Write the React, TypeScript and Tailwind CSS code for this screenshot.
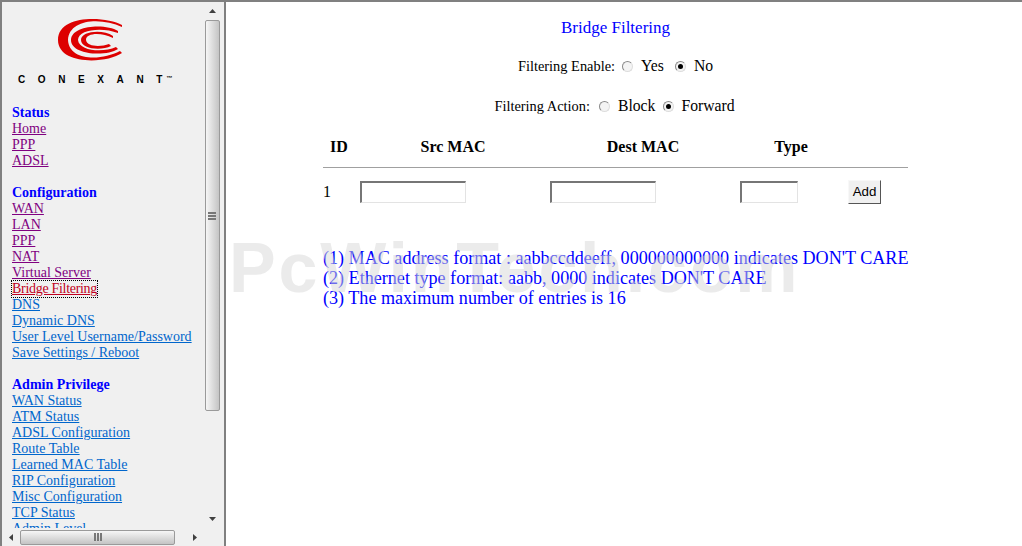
import React from 'react';

type SideLink = { label: string; tone: string };

const visited = 'text-[#800080]';
const unvisited = 'text-[#0066cc]';

const sections: { title: string; links: SideLink[] }[] = [
  {
    title: 'Status',
    links: [
      { label: 'Home', tone: visited },
      { label: 'PPP', tone: visited },
      { label: 'ADSL', tone: visited },
    ],
  },
  {
    title: 'Configuration',
    links: [
      { label: 'WAN', tone: visited },
      { label: 'LAN', tone: visited },
      { label: 'PPP', tone: visited },
      { label: 'NAT', tone: visited },
      { label: 'Virtual Server', tone: visited },
      { label: 'Bridge Filtering', tone: 'tracking-[-0.3px] text-[#c00020] outline-1 outline-dotted outline-black' },
      { label: 'DNS', tone: unvisited },
      { label: 'Dynamic DNS', tone: unvisited },
      { label: 'User Level Username/Password', tone: unvisited },
      { label: 'Save Settings / Reboot', tone: unvisited },
    ],
  },
  {
    title: 'Admin Privilege',
    links: [
      { label: 'WAN Status', tone: unvisited },
      { label: 'ATM Status', tone: unvisited },
      { label: 'ADSL Configuration', tone: unvisited },
      { label: 'Route Table', tone: unvisited },
      { label: 'Learned MAC Table', tone: unvisited },
      { label: 'RIP Configuration', tone: unvisited },
      { label: 'Misc Configuration', tone: unvisited },
      { label: 'TCP Status', tone: unvisited },
      { label: 'Admin Level', tone: unvisited },
    ],
  },
];

// three crescents, coordinates are page pixels
const ConexantLogo = () => (
  <svg width="66" height="44" viewBox="56 17 66 44" className="block">
    <g fill="#dd0000">
      <path d="M121 24 C105 15 57 13 57 39 C57 64 105 63 121 52 L119 50 C100 60 68 60 67 39 C68 18 100 16 121 26 Z" />
      <path d="M117 30 C105 22 70 24 70 39 C70 54 105 56 117 48 L115 46 C102 52 78 50 77 39 C77 28 102 26 117 32 Z" />
      <path d="M112 35 C102 28 80 30 80 39 C80 48 100 50 110 45 L108 43 C100 46 86 46 85 39 C85 32 100 31 112 37 Z" />
    </g>
  </svg>
);

const ScrollArrow = ({ dir }: { dir: 'up' | 'down' | 'left' | 'right' }) => {
  const points = {
    up: '0,4 3.5,0 7,4',
    down: '0,0 3.5,4 7,0',
    left: '4,0 0,3.5 4,7',
    right: '0,0 4,3.5 0,7',
  }[dir];
  const vertical = dir === 'up' || dir === 'down';
  return (
    <svg width={vertical ? 7 : 4} height={vertical ? 4 : 7} className="block">
      <polygon points={points} fill="#404040" />
    </svg>
  );
};

const Radio = ({ checked }: { checked?: boolean }) => (
  <span className="inline-flex h-[11px] w-[11px] items-center justify-center rounded-full border border-t-[#8a8a8a] border-l-[#8a8a8a] border-r-[#dddddd] border-b-[#dddddd] bg-[#f4f4f4]">
    {checked && <span className="h-[5px] w-[5px] rounded-full bg-black" />}
  </span>
);

const Sidebar = () => (
  <div className="flex h-full w-[226px] shrink-0 flex-col border-t-2 border-r-2 border-l-2 border-[#808080] bg-[#f0f0f0]">
    <div className="flex min-h-0 flex-1">
      <div className="min-w-0 flex-1 overflow-hidden pl-[10px]">
        <div className="flex flex-col items-start pt-[16px]">
          <div className="ml-[45px]">
            <ConexantLogo />
          </div>
          <div className="mt-[12px] ml-[6px] flex whitespace-nowrap font-['Liberation_Sans',sans-serif] text-[10px] leading-[12px] font-bold text-black">
            <span className="tracking-[12.6px]">CONEXAN</span>
            <span>T</span>
            <span className="ml-[4px] text-[6px] leading-[8px]">™</span>
          </div>
        </div>
        <div className="mt-[19px] flex flex-col gap-4 text-[14px] leading-4">
          {sections.map((s) => (
            <div key={s.title} className="flex flex-col items-start">
              <div className="font-bold text-[#0000ff]">{s.title}</div>
              {s.links.map((l) => (
                <a key={l.label} href="#" className={`whitespace-nowrap underline ${l.tone}`}>
                  {l.label}
                </a>
              ))}
            </div>
          ))}
        </div>
      </div>
      <div className="mr-[4px] flex w-[16px] shrink-0 flex-col items-center">
        <div className="flex h-[18px] items-center"><ScrollArrow dir="up" /></div>
        <div className="flex h-[391px] w-[15px] flex-col items-center justify-center gap-[1px] rounded-[2px] border border-[#9a9a9a] bg-gradient-to-r from-[#f6f6f6] to-[#c4c4c4]">
          <div className="h-[2px] w-[8px] bg-[#777777]" />
          <div className="h-[2px] w-[8px] bg-[#777777]" />
          <div className="h-[2px] w-[8px] bg-[#777777]" />
        </div>
        <div className="flex-1" />
        <div className="flex h-[18px] items-center"><ScrollArrow dir="down" /></div>
      </div>
    </div>
    <div className="flex h-[18px] shrink-0 items-center pr-[24px]">
      <div className="flex w-[18px] justify-center"><ScrollArrow dir="left" /></div>
      <div className="flex h-[15px] w-[155px] items-center justify-center gap-[1px] rounded-[2px] border border-[#9a9a9a] bg-gradient-to-b from-[#f6f6f6] to-[#c4c4c4]">
        <div className="h-[8px] w-[2px] bg-[#777777]" />
        <div className="h-[8px] w-[2px] bg-[#777777]" />
        <div className="h-[8px] w-[2px] bg-[#777777]" />
      </div>
      <div className="flex-1" />
      <div className="flex w-[10px] justify-center"><ScrollArrow dir="right" /></div>
    </div>
  </div>
);

const macInput = 'h-[22px] border-2 border-t-[#767676] border-l-[#767676] border-r-[#e3e3e3] border-b-[#e3e3e3] border-r-1 border-b-1 bg-white';

const Main = () => (
  <div className="relative h-full min-w-0 flex-1 overflow-hidden border-t-2 border-[#808080] bg-white pt-[16px] text-[#000000]">
    <div className="ml-[97px] w-[585px]">
      <h1 className="text-center text-[17px] leading-[20px] text-[#0000ff]">Bridge Filtering</h1>

      <div className="mt-[18px] flex items-center justify-center text-[15.7px] leading-[20px]">
        <span className="mr-[7px] text-[14.4px]">Filtering Enable:</span>
        <Radio />
        <span className="mr-[11px] ml-[8px]">Yes</span>
        <Radio checked />
        <span className="ml-[8px]">No</span>
      </div>
      <div className="mt-[20px] flex items-center justify-center pr-[2px] text-[15.7px] leading-[20px]">
        <span className="mr-[9px] text-[14.4px]">Filtering Action:</span>
        <Radio />
        <span className="mr-[8px] ml-[8px]">Block</span>
        <Radio checked />
        <span className="ml-[7px]">Forward</span>
      </div>

      <div className="mt-[21px] grid grid-cols-[37px_190px_190px_107px_61px] items-center border-b border-[#a0a0a0] pb-[10px] text-[16px] leading-[20px] font-bold">
        <span className="pl-[7px]">ID</span>
        <span className="pr-[4px] text-center">Src MAC</span>
        <span className="pr-[4px] text-center">Dest MAC</span>
        <span className="pr-[5px] text-center">Type</span>
        <span />
      </div>
      <div className="mt-[12px] grid grid-cols-[37px_190px_190px_107px_61px] items-center text-[16px]">
        <span>1</span>
        <input className={`${macInput} w-[106px]`} />
        <input className={`${macInput} w-[106px]`} />
        <input className={`${macInput} w-[58px]`} />
        <button className="ml-[1px] h-[24px] w-[33px] border border-t-[#f8f8f8] border-l-[#f8f8f8] border-r-[#555555] border-b-[#555555] bg-[#f0f0f0] font-['Liberation_Sans',sans-serif] text-[13.33px] text-black">
          Add
        </button>
      </div>

      <div className="mt-[44px] text-[18.1px] leading-[20px] whitespace-nowrap text-[#0000ff]">
        <p>(1) MAC address format : aabbccddeeff, 000000000000 indicates DON'T CARE</p>
        <p>(2) Ethernet type format: aabb, 0000 indicates DON'T CARE</p>
        <p>(3) The maximum number of entries is 16</p>
      </div>
    </div>

    {/* watermark sits over the notes */}
    <div className="pointer-events-none absolute top-[226px] left-[3px] font-['Liberation_Sans',sans-serif] text-[70px] leading-[80px] font-bold tracking-[0.04em] whitespace-nowrap text-[#d8d8d8] opacity-50">
      PcWinTech.com
    </div>
  </div>
);

export default function App() {
  return (
    <div className="flex h-[546px] w-[1022px] overflow-hidden bg-white font-['Liberation_Serif',serif]">
      <Sidebar />
      <Main />
    </div>
  );
}
